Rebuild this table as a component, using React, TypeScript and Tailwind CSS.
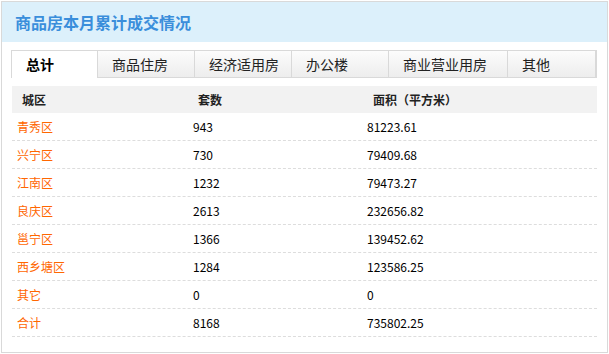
import React from "react";

const tabs = [
  { label: "总计", w: "w-[87px]" },
  { label: "商品住房", w: "w-[97px]" },
  { label: "经济适用房", w: "w-[97px]" },
  { label: "办公楼", w: "w-[97px]" },
  { label: "商业营业用房", w: "w-[119px]" },
  { label: "其他", w: "w-[89px]" },
];

const rows = [
  ["青秀区", "943", "81223.61"],
  ["兴宁区", "730", "79409.68"],
  ["江南区", "1232", "79473.27"],
  ["良庆区", "2613", "232656.82"],
  ["邕宁区", "1366", "139452.62"],
  ["西乡塘区", "1284", "123586.25"],
  ["其它", "0", "0"],
  ["合计", "8168", "735802.25"],
];

const cjk = "font-['Noto_Sans_CJK_SC',sans-serif]";

export default function App() {
  return (
    <div className={`w-[609px] h-[354px] bg-white pt-[1px] pl-[1px] ${cjk}`}>
      <div className="w-[607px] h-[352px] border border-[#d9d9d9] bg-white flex flex-col">
        <div className="h-[40px] bg-[#dcf0fb] flex items-center pl-[13px]">
          <span className="text-[16px] leading-none font-bold text-[#3a8edb]">
            商品房本月累计成交情况
          </span>
        </div>
        <div className="mt-[8px] ml-[9px] flex h-[28px]">
          {tabs.map((t, i) => (
            <div
              key={t.label}
              className={
                i === 0
                  ? `${t.w} h-[28px] bg-white border-t border-l border-r border-[#d9d9d9] flex items-center pl-[14px] text-[14px] font-bold text-black`
                  : `${t.w} h-[28px] bg-gradient-to-b from-[#fcfcfc] to-[#ededed] border-t border-b ${i === tabs.length - 1 ? "border-r-2" : "border-r"} border-[#d9d9d9] flex items-center pl-[14px] text-[14px] text-[#222]`
              }
            >
              {t.label}
            </div>
          ))}
        </div>
        <div className="mt-[8px] ml-[10px] w-[585px]">
          <div className="h-[27px] bg-[#f2f2f2] flex items-center text-[12px] font-bold text-[#222]">
            <div className="w-[176px] pl-[10px]">城区</div>
            <div className="w-[174px] pl-[10px]">套数</div>
            <div className="flex-1 pl-[11px]">面积（平方米）</div>
          </div>
          {rows.map((r) => (
            <div
              key={r[0]}
              className="h-[28px] border-b border-dashed border-[#dddddd] flex items-center text-[12px]"
            >
              <div className="w-[176px] pl-[5px] text-[#ff6600]">{r[0]}</div>
              <div className="w-[174px] pl-[5px] text-black tabular-nums">{r[1]}</div>
              <div className="flex-1 pl-[5px] text-black tabular-nums">{r[2]}</div>
            </div>
          ))}
        </div>
      </div>
    </div>
  );
}
